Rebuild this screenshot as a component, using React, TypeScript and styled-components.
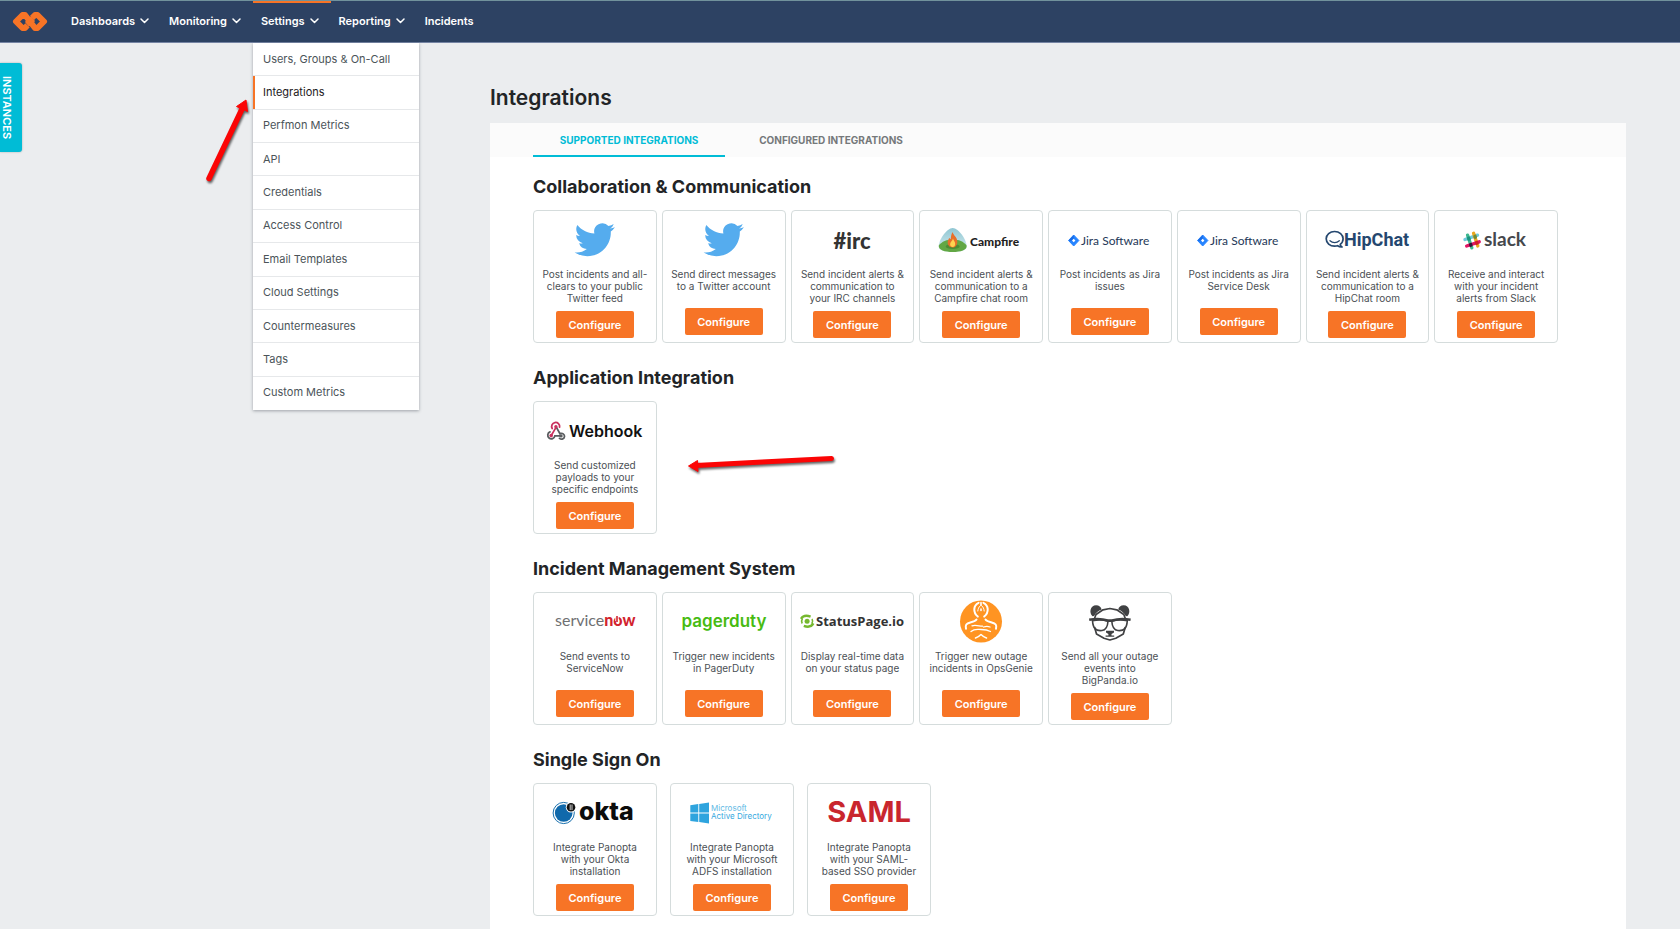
import React from 'react';
import styled, { createGlobalStyle } from 'styled-components';

const ORANGE = '#f77426';
const TEAL = '#00bcd6';

const GlobalStyle = createGlobalStyle`
  *, *::before, *::after { box-sizing: border-box; }
  body {
    margin: 0;
    background: #ebedef;
    color: #222426;
    font-family: Inter, "Liberation Sans", sans-serif;
  }
  button { font-family: inherit; cursor: pointer; }
`;

const Page = styled.div`
  position: relative;
  display: flex;
  flex-direction: column;
  min-height: 100vh;
`;

const TopBar = styled.header`
  display: flex;
  align-items: stretch;
  height: 43px;
  padding-left: 12px;
  background: #2d4263;
  border-top: 1px solid #71929c;
  border-bottom: 1px solid #7584a3;
`;

const HomeLink = styled.a`
  display: flex;
  align-items: center;
  width: 51px;
`;

const Nav = styled.nav`
  display: flex;
`;

const NavList = styled.ul`
  display: flex;
  margin: 0;
  padding: 0;
  list-style: none;
`;

const NavItem = styled.li<{ $active?: boolean }>`
  position: relative;
  display: flex;
  box-shadow: ${(p) => (p.$active ? `inset 0 2px ${ORANGE}` : 'none')};
`;

const NavButton = styled.button`
  display: flex;
  align-items: center;
  gap: 5px;
  padding: 0 12px 2px 8px;
  border: 0;
  background: none;
  color: #fff;
  font-size: 11px;
  font-weight: 600;
`;

const NavLink = styled.a`
  display: flex;
  align-items: center;
  padding: 0 12px 2px 8px;
  color: #fff;
  font-size: 11px;
  font-weight: 600;
  text-decoration: none;
`;

const Menu = styled.ul`
  position: absolute;
  z-index: 2;
  top: calc(100% + 1px);
  left: 0;
  display: grid;
  grid-auto-rows: 1fr;
  width: 166px;
  min-height: 367px;
  margin: 0;
  padding: 0;
  list-style: none;
  background: #fff;
  box-shadow: 0 1px 3px rgba(40, 50, 60, 0.4);
`;

const MenuItem = styled.li<{ $current: boolean }>`
  display: flex;
  border-left: 2px solid ${(p) => (p.$current ? ORANGE : 'transparent')};
  & + & { box-shadow: 0 -1px #e6e8ea; }
`;

const MenuLink = styled.a<{ $current: boolean }>`
  display: flex;
  flex: 1;
  align-items: center;
  padding: 0 0 2px 8px;
  color: ${(p) => (p.$current ? '#1d2022' : '#4b5459')};
  font-size: 11px;
  text-decoration: none;
`;

const InstancesTab = styled.button`
  position: absolute;
  top: 63px;
  left: 0;
  width: 22px;
  height: 89px;
  padding: 0 8px 0 0;
  border: 0;
  border-radius: 0 3px 3px 0;
  background: ${TEAL};
  box-shadow: 0 0 2px rgba(0, 0, 0, 0.3);
  color: #fff;
  font-size: 11px;
  font-weight: 600;
  writing-mode: vertical-rl;
`;

const Main = styled.main`
  display: flex;
  flex: 1;
  flex-direction: column;
  margin: 0 54px 0 490px;
  padding-top: 41px;
`;

const PageTitle = styled.h1`
  margin: 0 0 11px;
  font-size: 21px;
  font-weight: 600;
  line-height: 28px;
`;

const Panel = styled.div`
  flex: 1;
  padding-bottom: 12px;
  background: #fff;
`;

const TabStrip = styled.div`
  display: flex;
  gap: 10px;
  height: 34px;
  padding-left: 43px;
  background: #fbfbfb;
`;

const Tab = styled.button<{ $selected: boolean }>`
  min-width: 192px;
  padding: 0 23px;
  border: 0;
  background: none;
  box-shadow: ${(p) => (p.$selected ? `inset 0 -2px ${TEAL}` : 'none')};
  color: ${(p) => (p.$selected ? TEAL : '#75787a')};
  font-size: 10px;
  font-weight: 700;
`;

const Sections = styled.div`
  display: flex;
  flex-direction: column;
  gap: 23px;
  padding: 18px 20px 0 43px;
`;

const SectionTitle = styled.h2`
  margin: 0 0 11px;
  font-size: 18px;
  font-weight: 700;
  line-height: 24px;
`;

const CardGrid = styled.ul<{ $loose?: boolean }>`
  display: grid;
  grid-template-columns: repeat(auto-fill, ${(p) => (p.$loose ? '124px' : 'minmax(120px, 1fr)')});
  gap: ${(p) => (p.$loose ? 13 : 5)}px;
  max-width: 1025px;
  margin: 0;
  padding: 0;
  list-style: none;
`;

const Card = styled.li`
  display: flex;
  flex-direction: column;
  align-items: center;
  height: 133px;
  border: 1px solid #d5dcdc;
  border-radius: 4px;
  background: #fff;
`;

const Logo = styled.svg`
  flex: none;
  width: 122px;
  height: 57px;
`;

const Blurb = styled.p`
  flex: none;
  min-height: 33px;
  margin: 0 0 7px;
  color: #4b5055;
  font-size: 10px;
  line-height: 12px;
  text-align: center;
  white-space: pre;
`;

const ConfigureButton = styled.button`
  flex: none;
  width: 78px;
  height: 27px;
  padding: 0;
  border: 0;
  border-radius: 2px;
  background: ${ORANGE};
  color: #fff;
  font-size: 11px;
  font-weight: 600;
`;

const Annotation = styled.svg<{ $x: number; $y: number }>`
  position: absolute;
  z-index: 3;
  left: ${(p) => p.$x}px;
  top: ${(p) => p.$y}px;
  pointer-events: none;
  filter: drop-shadow(1px 2px 1px rgba(0, 0, 0, 0.6));
`;

const Chevron = () => (
  <svg width="9" height="6" viewBox="0 0 9 6" fill="none" stroke="#fff" strokeWidth="1.5" aria-hidden="true">
    <path d="M1 1l3.500 3.500L8 1" strokeLinecap="round" strokeLinejoin="round" />
  </svg>
);

const BrandMark = () => (
  <svg width="36" height="22" viewBox="0 0 36 22" fill="none" stroke={ORANGE} strokeLinejoin="round" aria-hidden="true">
    <path d="M15.500 14.300L13 17h-2.500L4 10.500 10.500 4H13l10 13h2.500l6.500-6.500L25.500 4H23l-3 3" strokeWidth="6" />
    <path d="M17 14l-2.600-3M19 7l2.600 3" strokeWidth="2.400" strokeLinecap="round" />
  </svg>
);

const TwitterLogo = () => (
  <Logo role="img" aria-label="Twitter">
    <g transform="translate(40.6 8.6) scale(1.68)">
      <path fill="#55acee" d="M23.953 4.57a10 10 0 01-2.825.775 4.958 4.958 0 002.163-2.723c-.951.555-2.005.959-3.127 1.184a4.92 4.92 0 00-8.384 4.482C7.69 8.095 4.067 6.13 1.64 3.162a4.822 4.822 0 00-.666 2.475c0 1.71.87 3.213 2.188 4.096a4.904 4.904 0 01-2.228-.616v.06a4.923 4.923 0 003.946 4.827 4.996 4.996 0 01-2.212.085 4.936 4.936 0 004.604 3.417 9.867 9.867 0 01-6.102 2.105c-.39 0-.779-.023-1.17-.067a13.995 13.995 0 007.557 2.209c9.053 0 13.998-7.496 13.998-13.985 0-.21 0-.42-.015-.63A9.935 9.935 0 0024 4.59z" />
    </g>
  </Logo>
);

const IrcLogo = () => (
  <Logo>
    <text x="61" y="38" textAnchor="middle" fill="#333" fontFamily="Lato, sans-serif" fontSize="22" fontWeight="900">#irc</text>
  </Logo>
);

const CampfireLogo = () => (
  <Logo>
    <defs>
      <linearGradient id="campSky" x1="0" y1="0" x2="0" y2="1">
        <stop offset="0" stopColor="#8fc6d3" />
        <stop offset="1" stopColor="#d8eef0" />
      </linearGradient>
    </defs>
    <path d="M32.7 17c6 0 14 12 14 18.5 0 4-6 5.5-14 5.500s-14-1.500-14-5.500c0-6.500 8-18.500 14-18.500z" fill="url(#campSky)" />
    <path d="M18.8 34.5c3-4 8-6 14-6s11 2 13.800 6c.8 4.500-6 6.500-13.900 6.500s-14.500-2-13.900-6.500z" fill="#62a744" />
    <ellipse cx="32.7" cy="35.5" rx="7" ry="2.5" fill="#4c8b34" />
    <path d="M32.5 21c.5 3 4.800 5 4.800 9.500 0 4-2 6-4.800 6s-4.800-2-4.800-5.200c0-2 1-3 1.600-4.600.6 1 .9 1.400 1.400 1.600.2-2.500.6-5 1.800-7.300z" fill="#e8702a" />
    <path d="M33 27.5c.3 2 2.200 3 2.200 5.200s-1.200 3.300-2.600 3.300-2.500-1-2.500-2.800c0-2.200 2.300-3 2.900-5.700z" fill="#ffd34f" />
    <text x="50" y="35" fill="#1f1f1f" fontFamily="Lato, sans-serif" fontSize="12" fontWeight="900">Campfire</text>
  </Logo>
);

const JiraLogo = () => (
  <Logo>
    <path d="M24.7 24l5.200 5.500-5.200 5.500-5.200-5.500z" fill="#2684ff" stroke="#2684ff" strokeWidth="1" strokeLinejoin="round" />
    <path d="M24.7 24v4l-3 2-2.200-.5z" fill="#0f5bd8" opacity=".6" />
    <path d="M24.7 27.7l1.700 1.800-1.700 1.800-1.700-1.800z" fill="#fff" />
    <text x="32" y="34" fill="#253858" fontFamily="Lato, sans-serif" fontSize="12">Jira Software</text>
  </Logo>
);

const HipChatLogo = () => (
  <Logo>
    <g fill="none" stroke="#24476f" strokeWidth="1.7" strokeLinecap="round" strokeLinejoin="round">
      <path d="M34.2 33.4c1.800-1.300 2.900-3.300 2.900-5.600 0-4.300-3.800-7.300-8.500-7.300s-8.400 3-8.400 7.300 3.700 7.300 8.400 7.300c1 0 2-.1 2.900-.4 1 .8 2.700 1.400 4.500 1.300-1-.7-1.600-1.600-1.800-2.600z" />
      <path d="M24 29.8c2.600 2.400 6.700 2.400 9.300 0" strokeWidth="1.3" />
    </g>
    <text x="38" y="35" fill="#24476f" fontFamily="Roboto, sans-serif" fontSize="18" fontWeight="700">HipChat</text>
  </Logo>
);

const SlackLogo = () => (
  <Logo>
    <g strokeWidth="3.4" strokeLinecap="round">
      <path d="M30 28.5l12.500-4.300" stroke="#6ecadc" />
      <path d="M32.6 24.2l4.200 12.600" stroke="#3eb890" />
      <path d="M38.6 22.3l4.200 12.600" stroke="#e9a820" />
      <path d="M31.7 35l12.500-4.200" stroke="#e01563" />
      <path d="M33.7 27.2l.3.900" stroke="#1a937d" />
      <path d="M40 25.3l.3.900" stroke="#6f8a3a" />
      <path d="M35.7 33.6l.2.600" stroke="#361238" />
      <path d="M41.7 31.6l.2.600" stroke="#cc2027" />
    </g>
    <text x="49" y="35" fill="#45484c" fontFamily="Lato, sans-serif" fontSize="19" fontWeight="700">slack</text>
  </Logo>
);

const WebhookLogo = () => (
  <Logo>
    <g fill="none" strokeWidth="1.8" strokeLinecap="round">
      <path d="M21.3 26.6l-3.700 6.300M18.2 26.500a4 4 0 1 1 7.400-1.400" stroke="#c9315f" />
      <path d="M22 24.6l4 7.200c2.400-1.300 4.600.6 4.500 2.700-.1 2.300-2.900 3.600-5 1.900" stroke="#5a5d60" />
      <path d="M16 29.9a3.600 3.600 0 1 0 4.900 4h6" stroke="#5a5d60" />
    </g>
    <circle cx="21.9" cy="24.7" r="1.7" fill="#c9315f" />
    <circle cx="17.2" cy="33.6" r="1.8" fill="#c9315f" />
    <circle cx="27" cy="33.9" r="1.7" fill="#5a5d60" />
    <text x="35" y="35" fill="#111" fontFamily="Inter, sans-serif" fontSize="16" fontWeight="600">Webhook</text>
  </Logo>
);

const ServiceNowLogo = () => (
  <Logo>
    <text x="21" y="33" fill="#6f7072" fontFamily="Lato, sans-serif" fontSize="16">
      service<tspan fill="#d2232e" fontWeight="900">now</tspan>
    </text>
    <path d="M83 22v6" stroke="#fff" strokeWidth="3.4" />
    <path d="M83 23v6" stroke="#d2232e" strokeWidth="1.6" />
  </Logo>
);

const PagerDutyLogo = () => (
  <Logo>
    <text x="61" y="34" textAnchor="middle" fill="#47bb12" fontFamily="Inter, sans-serif" fontSize="17" fontWeight="600">pagerduty</text>
  </Logo>
);

const StatusPageLogo = () => (
  <Logo>
    <g fill="none" stroke="#76b82f" strokeWidth="2.4">
      <path d="M10 25.8c1.800-3 5.400-3.800 9.600-2.200" />
      <path d="M22.4 30.4c-1.800 3-5.400 4-9.600 2.400" />
      <path d="M11.2 30.5c-1-1.600-.8-3.300.2-4.800M21 26c1 1.600.8 3.200-.2 4.700" strokeWidth="1.6" />
    </g>
    <circle cx="16.1" cy="28.2" r="2.5" fill="#76b82f" />
    <text x="25" y="33" fill="#333" fontFamily="Open Sans, sans-serif" fontSize="13" fontWeight="700">StatusPage.io</text>
  </Logo>
);

const OpsGenieLogo = () => (
  <Logo role="img" aria-label="OpsGenie">
    <circle cx="61" cy="28.5" r="21" fill="#ff9422" />
    <g fill="none" stroke="#fff" strokeLinecap="round" strokeLinejoin="round">
      <path d="M58.6 9.800c-5.400 2.600-5.800 9.600-.8 13.800M63.4 9.800c5.400 2.600 5.800 9.600.8 13.800" strokeWidth="2" />
      <path d="M57.800 18c.2-2.200 1-3.800 2.200-5M64.200 18c-.2-2.200-1-3.800-2.200-5" strokeWidth="1" />
      <path d="M61 9.500v3M61 16v1.500" strokeWidth="1.6" />
      <path d="M56.5 26.5c-1.800 3-8.500 2.600-10.200 5-.9 1.300-.7 2.500-.3 4.200M65.500 26.5c1.800 3 8.500 2.600 10.200 5 .9 1.300.7 2.500.3 4.200" strokeWidth="2" />
      <path d="M52 32.800c4-1.400 7.500.6 10.500.4M70 34c-2.500-1-4.500-.6-6.500 0M51 38.500c3.500-3 6.500-2 10-2s6 0 9.500 2" strokeWidth="1.300" />
      <path d="M55.500 45c2.500-.8 4-2 5.500-3.500 1.500 1.500 3 2.700 5.500 3.500" strokeWidth="1.500" />
    </g>
  </Logo>
);

const BigPandaLogo = () => (
  <Logo role="img" aria-label="BigPanda">
    <g fill="#404143">
      <path d="M43.5 23.2c-3.800-3.600-2.200-11 3.600-11 3 0 5 1.800 5.500 4.300-3.200 1.200-5.800 3.300-7.500 6.500z" />
      <path d="M78.3 23.2c3.800-3.600 2.200-11-3.600-11-3 0-5 1.800-5.500 4.300 3.200 1.200 5.800 3.300 7.500 6.500z" />
      <path d="M57 37.8h8v1.800l-2.500 1.400v1.500h2.700v1.200h-8.600v-1.200h2.800V41L57 39.6z" />
    </g>
    <g fill="none" stroke="#404143" strokeLinejoin="round">
      <path d="M45.5 25.500l1.500-4 7-4.700 6.900-1.300 6.900 1.300 7 4.700 1.500 4M45.500 34l2 7 7.500 4.300 5.900 1.700 5.900-1.700 7.500-4.300 2-7" strokeWidth="1.7" />
      <path d="M43.5 27.6c5-1 10.500-1 15.500.6-.3 4.500-1.800 8.800-6 9.300-6.500.8-9-2.500-9.500-9.900zM78.300 27.6c-5-1-10.500-1-15.500.6.3 4.500 1.800 8.800 6 9.300 6.500.8 9-2.500 9.500-9.900z" strokeWidth="1.600" />
      <path d="M40.2 26.8c7-1.200 13-1 18.500.8h4.400c5.500-1.800 11.500-2 18.500-.8" strokeWidth="2.6" />
    </g>
  </Logo>
);

const OktaLogo = () => (
  <Logo>
    <circle cx="29.7" cy="29" r="10.6" fill="#fff" stroke="#1870ae" strokeWidth="1" />
    <circle cx="29.7" cy="29" r="8.8" fill="#1069ab" />
    <circle cx="37" cy="23.2" r="5.2" fill="#fff" />
    <circle cx="37" cy="23.2" r="4.3" fill="#111" />
    <path d="M36.2 20.500v5.600M38 20.500v5.600" stroke="#fff" strokeWidth=".8" />
    <text x="45" y="36" fill="#0c0c0c" fontFamily="Inter, sans-serif" fontSize="25" fontWeight="800">okta</text>
  </Logo>
);

const ActiveDirectoryLogo = () => (
  <Logo>
    <path d="M19.3 21.2l8-1.100v8.500h-8zM28.200 20l9.800-1.400v10h-9.800zM19.300 29.500h8V38l-8-1.100zM28.200 29.500H38v10l-9.800-1.400z" fill="#2ea4de" />
    <g fontFamily="Inter, sans-serif" fontSize="8">
      <text x="40" y="27" fill="#62bae5">Microsoft</text>
      <text x="40" y="35" fill="#35a8e0">Active Directory</text>
    </g>
  </Logo>
);

const SamlLogo = () => (
  <Logo>
    <text x="61" y="38" textAnchor="middle" fill="#c9262e" fontFamily="Inter, sans-serif" fontSize="29" fontWeight="700">SAML</text>
  </Logo>
);

type Integration = { logo: React.ComponentType; text: string };
type Group = { title: string; loose?: boolean; items: Integration[] };

const groups: Group[] = [
  {
    title: 'Collaboration & Communication',
    items: [
      { logo: TwitterLogo, text: 'Post incidents and all-\nclears to your public\nTwitter feed' },
      { logo: TwitterLogo, text: 'Send direct messages\nto a Twitter account' },
      { logo: IrcLogo, text: 'Send incident alerts &\ncommunication to\nyour IRC channels' },
      { logo: CampfireLogo, text: 'Send incident alerts &\ncommunication to a\nCampfire chat room' },
      { logo: JiraLogo, text: 'Post incidents as Jira\nissues' },
      { logo: JiraLogo, text: 'Post incidents as Jira\nService Desk' },
      { logo: HipChatLogo, text: 'Send incident alerts &\ncommunication to a\nHipChat room' },
      { logo: SlackLogo, text: 'Receive and interact\nwith your incident\nalerts from Slack' },
    ],
  },
  {
    title: 'Application Integration',
    items: [{ logo: WebhookLogo, text: 'Send customized\npayloads to your\nspecific endpoints' }],
  },
  {
    title: 'Incident Management System',
    items: [
      { logo: ServiceNowLogo, text: 'Send events to\nServiceNow' },
      { logo: PagerDutyLogo, text: 'Trigger new incidents\nin PagerDuty' },
      { logo: StatusPageLogo, text: 'Display real-time data\non your status page' },
      { logo: OpsGenieLogo, text: 'Trigger new outage\nincidents in OpsGenie' },
      { logo: BigPandaLogo, text: 'Send all your outage\nevents into\nBigPanda.io' },
    ],
  },
  {
    title: 'Single Sign On',
    loose: true,
    items: [
      { logo: OktaLogo, text: 'Integrate Panopta\nwith your Okta\ninstallation' },
      { logo: ActiveDirectoryLogo, text: 'Integrate Panopta\nwith your Microsoft\nADFS installation' },
      { logo: SamlLogo, text: 'Integrate Panopta\nwith your SAML-\nbased SSO provider' },
    ],
  },
];

const settingsMenu = [
  'Users, Groups & On-Call',
  'Integrations',
  'Perfmon Metrics',
  'API',
  'Credentials',
  'Access Control',
  'Email Templates',
  'Cloud Settings',
  'Countermeasures',
  'Tags',
  'Custom Metrics',
];

const navMenus = ['Dashboards', 'Monitoring', 'Settings', 'Reporting'];

const SettingsMenu = () => (
  <Menu>
    {settingsMenu.map((entry) => (
      <MenuItem key={entry} $current={entry === 'Integrations'}>
        <MenuLink href="#" $current={entry === 'Integrations'}>{entry}</MenuLink>
      </MenuItem>
    ))}
  </Menu>
);

export default function App() {
  return (
    <Page>
      <GlobalStyle />
      <TopBar>
        <HomeLink href="#" aria-label="Home">
          <BrandMark />
        </HomeLink>
        <Nav>
          <NavList>
            {navMenus.map((name) => (
              <NavItem key={name} $active={name === 'Settings'}>
                <NavButton type="button" aria-expanded={name === 'Settings'}>
                  {name}
                  <Chevron />
                </NavButton>
                {name === 'Settings' && <SettingsMenu />}
              </NavItem>
            ))}
            <NavItem>
              <NavLink href="#">Incidents</NavLink>
            </NavItem>
          </NavList>
        </Nav>
      </TopBar>
      <InstancesTab type="button">INSTANCES</InstancesTab>
      <Main>
        <PageTitle>Integrations</PageTitle>
        <Panel>
          <TabStrip role="tablist">
            <Tab type="button" role="tab" aria-selected="true" $selected>SUPPORTED INTEGRATIONS</Tab>
            <Tab type="button" role="tab" aria-selected="false" $selected={false}>CONFIGURED INTEGRATIONS</Tab>
          </TabStrip>
          <Sections>
            {groups.map((group) => (
              <section key={group.title}>
                <SectionTitle>{group.title}</SectionTitle>
                <CardGrid $loose={group.loose}>
                  {group.items.map(({ logo: Mark, text }) => (
                    <Card key={text}>
                      <Mark />
                      <Blurb>{text}</Blurb>
                      <ConfigureButton type="button">Configure</ConfigureButton>
                    </Card>
                  ))}
                </CardGrid>
              </section>
            ))}
          </Sections>
        </Panel>
      </Main>
      <Annotation $x={200} $y={94} width="56" height="96" aria-hidden="true">
        <path d="M9 84.500L42 15" stroke="#fb0505" strokeWidth="5.5" strokeLinecap="round" />
        <path d="M46 6L36.500 12.500 47.500 17.500z" fill="#fb0505" stroke="#fb0505" strokeWidth="1" strokeLinejoin="round" />
      </Annotation>
      <Annotation $x={680} $y={450} width="162" height="30" aria-hidden="true">
        <path d="M151.500 8.500L16 15.500" stroke="#fb0505" strokeWidth="5" strokeLinecap="round" />
        <path d="M8.500 16L17.500 10.500 18 21.500z" fill="#fb0505" stroke="#fb0505" strokeWidth="1" strokeLinejoin="round" />
      </Annotation>
    </Page>
  );
}
